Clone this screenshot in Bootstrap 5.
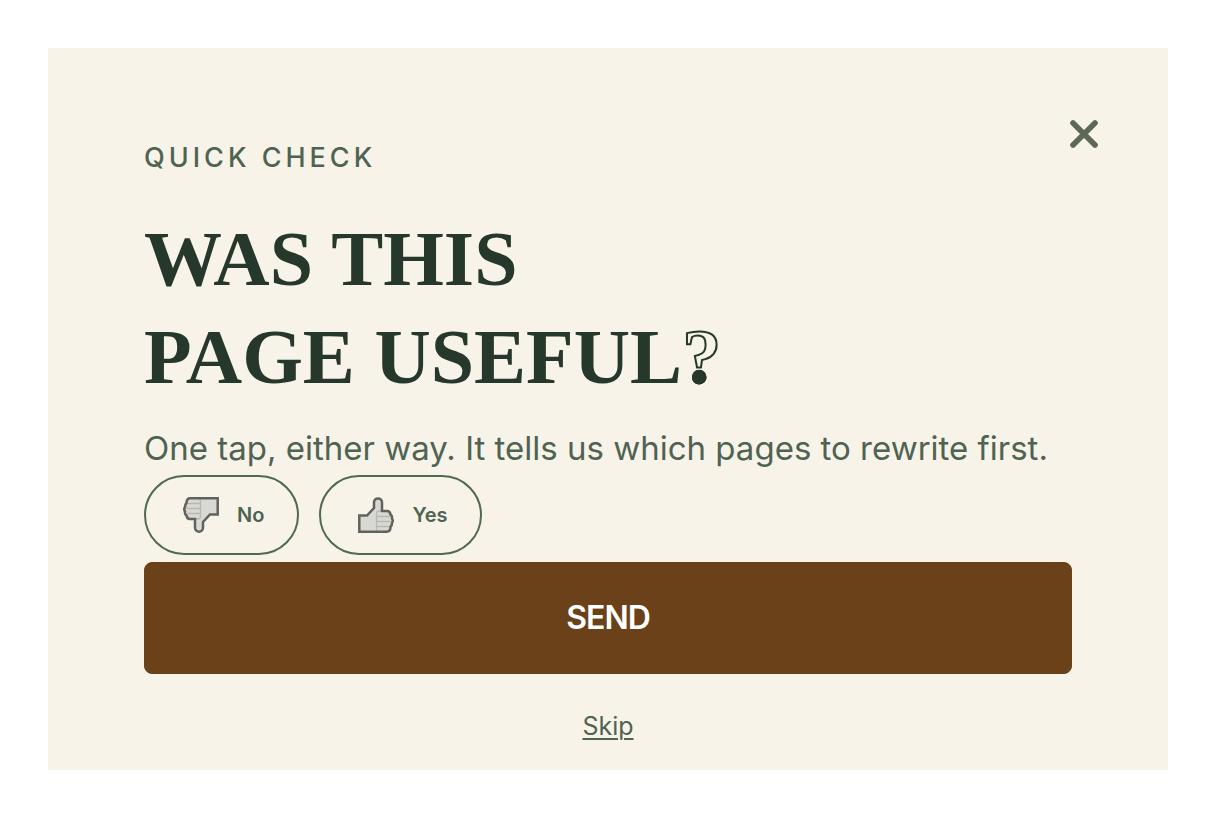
<!DOCTYPE html>
<html lang="en">
<head>
<meta charset="utf-8">
<meta name="viewport" content="width=device-width, initial-scale=1">
<title>Quick check</title>
<link rel="stylesheet" href="https://cdn.jsdelivr.net/npm/bootstrap@5.3.0/dist/css/bootstrap.min.css">
<style>
body{background:#fff;color:#4f6352;font-family:Inter,"Liberation Sans",sans-serif}
.survey{background:#f8f3e8;padding:96px 96px 24px}
.close-survey{top:62px;right:60px;width:48px;height:48px;color:#5d6857}
.eyebrow{font-size:27px;font-weight:500;line-height:28px;letter-spacing:4px;margin-bottom:38px}
.headline{font-family:"Liberation Serif",serif;font-size:78px;font-weight:700;line-height:98px;color:#26382b;margin-bottom:20px}
.outline-mark{line-height:1;color:transparent;-webkit-text-stroke:2px #26382b;background:linear-gradient(#f8f3e8 66%,#26382b 66%);-webkit-background-clip:text;background-clip:text}
.intro{font-size:33px;line-height:44px;margin-bottom:5px}
.choices{gap:20px;margin-bottom:7px}
.choice{--bs-btn-color:#4f6352;--bs-btn-border-color:#4f6a50;--bs-btn-border-width:2px;--bs-btn-border-radius:40px;--bs-btn-padding-x:33px;--bs-btn-padding-y:0;--bs-btn-font-size:20px;--bs-btn-font-weight:600;height:80px;gap:14px}
.send{--bs-btn-color:#fff;--bs-btn-bg:#6a4119;--bs-btn-border-color:#6a4119;--bs-btn-hover-bg:#57340f;--bs-btn-hover-color:#fff;--bs-btn-border-radius:8px;--bs-btn-font-size:32px;--bs-btn-font-weight:600;height:112px;letter-spacing:-1px;margin-bottom:32px}
.skip{color:inherit;font-size:25px;line-height:40px;text-decoration-thickness:2px;text-underline-offset:3px}
</style>
</head>
<body class="p-3 p-md-5">
<main class="survey position-relative">
<button type="button" class="close-survey btn p-0 border-0 position-absolute d-flex align-items-center justify-content-center" aria-label="Close">
<svg width="28" height="28" viewBox="0 0 28 28" fill="none" stroke="currentColor" stroke-width="5.6" stroke-linecap="round"><path d="M3 3 25 25M25 3 3 25"/></svg>
</button>
<p class="eyebrow">QUICK CHECK</p>
<h1 class="headline">WAS THIS<br>PAGE USEFUL<span class="outline-mark">?</span></h1>
<p class="intro">One tap, either way. It tells us which pages to rewrite first.</p>
<div class="choices d-flex flex-wrap">
<button type="button" class="choice btn d-flex align-items-center">
<svg width="44" height="44" viewBox="-4 -4 44 44" aria-hidden="true"><g transform="rotate(180 18 18)"><path d="M1.3 18.5H9l7-7.500V5.500c0-5.500 8-5.500 8 0V14h5q3 0 3.500 3.500 2 1.500 1.500 4 1.500 2 0 4.500 0 2.500-1.500 4 0 4.700-4 4.700H1.300Z" fill="#d9d9d4"/><path d="M24 14h-3q-2.500 0-2.500 2.500V32q0 2.500 2 2.500M19 19.500h13M19 24.500h13.500M19 29.500h12.500" fill="none" stroke="#b8b8b3" stroke-width="1.300"/><path d="M1.3 18.500H9l7-7.500V5.500c0-5.500 8-5.500 8 0V14h5q3 0 3.500 3.500 2 1.500 1.500 4 1.500 2 0 4.500 0 2.500-1.500 4 0 4.700-4 4.700H1.300Z" fill="none" stroke="#61625d" stroke-width="2.500"/></g></svg>
<span>No</span></button>
<button type="button" class="choice btn d-flex align-items-center">
<svg width="44" height="44" viewBox="-4 -4 44 44" aria-hidden="true"><path d="M1.3 18.500H9l7-7.500V5.500c0-5.500 8-5.500 8 0V14h5q3 0 3.500 3.500 2 1.500 1.500 4 1.500 2 0 4.500 0 2.500-1.500 4 0 4.700-4 4.700H1.300Z" fill="#d9d9d4"/><path d="M24 14h-3q-2.500 0-2.500 2.500V32q0 2.500 2 2.500M19 19.500h13M19 24.500h13.500M19 29.500h12.500" fill="none" stroke="#b8b8b3" stroke-width="1.300"/><path d="M1.3 18.500H9l7-7.500V5.500c0-5.500 8-5.500 8 0V14h5q3 0 3.500 3.500 2 1.500 1.500 4 1.500 2 0 4.500 0 2.500-1.500 4 0 4.700-4 4.700H1.300Z" fill="none" stroke="#61625d" stroke-width="2.500"/></svg>
<span>Yes</span></button>
</div>
<button type="submit" class="send btn w-100">SEND</button>
<div class="text-center"><a class="skip" href="#">Skip</a></div>
</main>
<script src="https://cdn.jsdelivr.net/npm/bootstrap@5.3.0/dist/js/bootstrap.bundle.min.js"></script>
</body>
</html>
